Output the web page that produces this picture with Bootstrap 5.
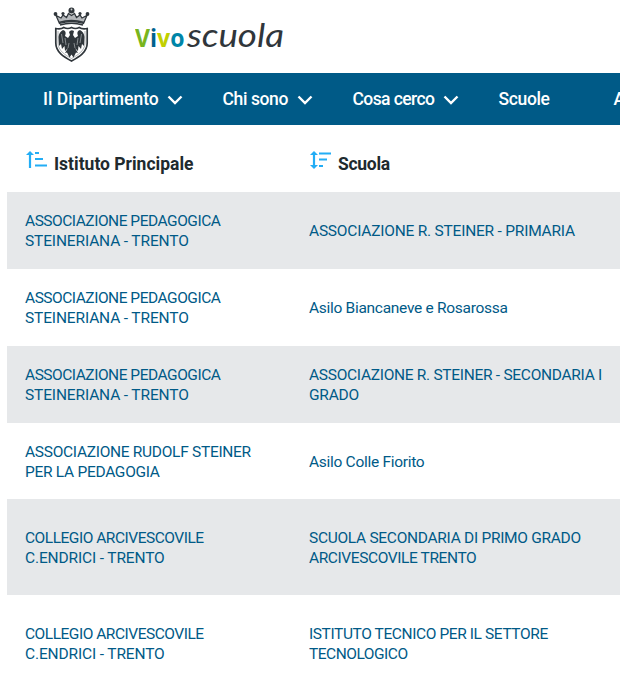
<!DOCTYPE html>
<html lang="it">
<head>
<meta charset="utf-8">
<meta name="viewport" content="width=device-width, initial-scale=1">
<title>Vivoscuola</title>
<link href="https://cdn.jsdelivr.net/npm/bootstrap@5.3.0/dist/css/bootstrap.min.css" rel="stylesheet">
<style>
body{font-family:Roboto,"Open Sans",sans-serif;overflow:hidden;height:674px;color:#202a2e}
.site-head{height:73px;padding-left:53px;gap:45px}
.crest{width:37px;height:56px;margin-top:-3px}
.logo{width:156px;height:50px;margin-top:-4px}
.main-bar{height:52px;background:#005a87;padding-left:43px!important;font-size:17.5px;font-weight:500}
.main-bar .nav-link{color:#fff;line-height:24px}
.main-bar svg{width:16px;height:10px;margin-left:8.5px}
.i1{width:179.5px}.i2{width:130px;letter-spacing:-.38px}.i3{width:146px;letter-spacing:-.6px}.i4{width:115px;letter-spacing:-.35px}
.schools{width:620px;padding-left:7px;overflow:hidden}
.heads{height:67px}
.heads strong{font-size:17.5px;line-height:24px;padding-top:10px}
.heads svg{width:22px;height:18px;margin:2px 6px 0 1px}
.c1{width:284px;flex:none}
.c1,.c2{padding:0 18px}
.c2{padding-right:0}
.rec{height:76.85px;font-size:15.5px;line-height:20px;padding-top:2px}
.rec.tall{height:96px}
.rec:nth-child(even){background:#e6e8ea}
.rec a{color:#005a87}
.rec span,.heads strong,.main-bar span{white-space:nowrap}
.k1{letter-spacing:-.14px}.k2{letter-spacing:-.22px}.k3{letter-spacing:-.29px}.k4{letter-spacing:-.4px}.k5{letter-spacing:-.48px}
</style>
</head>
<body>
<header class="site-head d-flex align-items-center">
<svg class="crest" viewBox="0 0 37 56" aria-hidden="true">
<g fill="none" stroke="#30363b">
<path d="M6.500 16.500L3 8.500l5 2.500 2-3 3.500 2.500 2-4 3 2 3-2 2 4L27 8l2 3 5-2.500-3.500 8Q18.500 12.500 6.500 16.500z" fill="#b4b7ba" stroke-width="1.300"/>
<path d="M6 15.500Q18.500 11.500 31 15.500" stroke-width="1.500"/><path d="M7 18Q18.500 14.500 30 18" stroke-width="1.400"/>
<path d="M2.800 21.500q5 1 8-1 4 2 7.700 0 4 2 7.700 0 3 2 8 1V36c0 9-8 14-15.700 18C10.800 50 2.800 45 2.800 36z" fill="#fff" stroke-width="1.700"/>
<path d="M5 24v12c0 7.500 7 12 13.500 15.500C25 48 32 43.500 32 36V24" stroke="#8d9194" stroke-width=".7"/>
</g>
<g fill="#30363b"><circle cx="2.500" cy="7" r="1.900"/><circle cx="34.500" cy="7" r="1.900"/><circle cx="18.500" cy="3.500" r="3"/><circle cx="10" cy="6.500" r="1.600"/><circle cx="27" cy="6.500" r="1.600"/>
<path d="M16 25q2-3 5-1l-1 4 2 3 3-2q-2-5 2-6 4 2 4.500 7l-.5 9-2-2-1 5-2.500-3-.5 5-3-3 3 5-2-.5-2.500 5-2-3-2 3-2.500-5-2 .5 3-5-3 3-.5-5L9 42l-1-5-2 2-.5-9Q6 25 10 23q4 1 2 6l3 2 2-3z"/></g>
<path d="M8.500 27l1.500 9M28.500 27L27 36M12 31l1 7M25 31l-1 7M16 36l-1 5M21 36l1 5" stroke="#aeb2b4" stroke-width=".7"/>
<circle cx="18.500" cy="2.500" r=".9" fill="#c9cccd"/>
</svg>
<svg class="logo" viewBox="0 0 156 50" role="img" aria-label="Vivoscuola">
<text x="0" y="37" font-family="Open Sans" font-weight="700" font-size="24.500" textLength="49.500" lengthAdjust="spacingAndGlyphs"><tspan fill="#78b51e">V</tspan><tspan fill="#00628f">i</tspan><tspan fill="#c1d000">v</tspan><tspan fill="#0085a8">o</tspan></text>
<text x="52" y="37" font-family="Lato" font-style="italic" font-weight="400" font-size="32" fill="#30363b" textLength="97" lengthAdjust="spacingAndGlyphs">scuola</text>
</svg>
</header>
<nav class="main-bar navbar navbar-expand p-0 overflow-hidden">
<div class="navbar-nav flex-nowrap">
<a class="nav-link p-0 i1 flex-shrink-0" href="#"><span>Il Dipartimento</span><svg viewBox="0 0 16 10"><path d="M1.500 1.500L8 8l6.500-6.500" fill="none" stroke="#fff" stroke-width="2.400"/></svg></a>
<a class="nav-link p-0 i2 flex-shrink-0" href="#"><span>Chi sono</span><svg viewBox="0 0 16 10"><path d="M1.500 1.500L8 8l6.500-6.500" fill="none" stroke="#fff" stroke-width="2.400"/></svg></a>
<a class="nav-link p-0 i3 flex-shrink-0" href="#"><span>Cosa cerco</span><svg viewBox="0 0 16 10"><path d="M1.500 1.500L8 8l6.500-6.500" fill="none" stroke="#fff" stroke-width="2.400"/></svg></a>
<a class="nav-link p-0 i4 flex-shrink-0" href="#"><span>Scuole</span></a>
<a class="nav-link p-0 flex-shrink-0" href="#"><span>A</span></a>
</div>
</nav>
<main class="schools">
<div class="heads d-flex align-items-center">
<div class="c1 d-flex align-items-center"><svg viewBox="0 0 22 18"><path d="M4 3v14M9 2h4M9 8h8M9 14.500h12" fill="none" stroke="#23adf5" stroke-width="2.200"/><path d="M0 4l4-4 4 4z" fill="#23adf5"/></svg><strong><span>Istituto Principale</span></strong></div>
<div class="c2 d-flex align-items-center"><svg viewBox="0 0 22 18"><path d="M4 3v12M9 2.500h12M9 8.500h8M9 15h4" fill="none" stroke="#23adf5" stroke-width="2.200"/><path d="M0 4l4-4 4 4zM0 14l4 4 4-4z" fill="#23adf5"/></svg><strong><span class="k3">Scuola</span></strong></div>
</div>
<div class="rec d-flex align-items-center"><div class="c1"><a class="text-decoration-none" href="#"><span class="k5">ASSOCIAZIONE PEDAGOGICA</span><br><span class="k1">STEINERIANA - TRENTO</span></a></div><div class="c2"><a class="text-decoration-none" href="#"><span class="k2">ASSOCIAZIONE R. STEINER - PRIMARIA</span></a></div></div>
<div class="rec d-flex align-items-center"><div class="c1"><a class="text-decoration-none" href="#"><span class="k5">ASSOCIAZIONE PEDAGOGICA</span><br><span class="k1">STEINERIANA - TRENTO</span></a></div><div class="c2"><a class="text-decoration-none" href="#"><span class="k3">Asilo Biancaneve e Rosarossa</span></a></div></div>
<div class="rec d-flex align-items-center"><div class="c1"><a class="text-decoration-none" href="#"><span class="k5">ASSOCIAZIONE PEDAGOGICA</span><br><span class="k1">STEINERIANA - TRENTO</span></a></div><div class="c2"><a class="text-decoration-none" href="#"><span class="k3">ASSOCIAZIONE R. STEINER - SECONDARIA I</span><br><span class="k2">GRADO</span></a></div></div>
<div class="rec d-flex align-items-center"><div class="c1"><a class="text-decoration-none" href="#"><span class="k3">ASSOCIAZIONE RUDOLF STEINER</span><br><span class="k3">PER LA PEDAGOGIA</span></a></div><div class="c2"><a class="text-decoration-none" href="#"><span class="k3">Asilo Colle Fiorito</span></a></div></div>
<div class="rec tall d-flex align-items-center"><div class="c1"><a class="text-decoration-none" href="#"><span class="k5">COLLEGIO ARCIVESCOVILE</span><br><span class="k1">C.ENDRICI - TRENTO</span></a></div><div class="c2"><a class="text-decoration-none" href="#"><span class="k3">SCUOLA SECONDARIA DI PRIMO GRADO</span><br><span class="k4">ARCIVESCOVILE TRENTO</span></a></div></div>
<div class="rec tall d-flex align-items-center"><div class="c1"><a class="text-decoration-none" href="#"><span class="k5">COLLEGIO ARCIVESCOVILE</span><br><span class="k1">C.ENDRICI - TRENTO</span></a></div><div class="c2"><a class="text-decoration-none" href="#"><span class="k4">ISTITUTO TECNICO PER IL SETTORE</span><br><span class="k5">TECNOLOGICO</span></a></div></div>
</main>
<script src="https://cdn.jsdelivr.net/npm/bootstrap@5.3.0/dist/js/bootstrap.bundle.min.js"></script>
</body>
</html>
